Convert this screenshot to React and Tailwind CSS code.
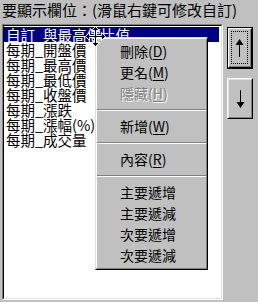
import React from "react";

const FONT = { fontFamily: '"Noto Sans CJK TC", "Noto Sans", sans-serif' };

const rows = [
  "自訂_與最高價比值",
  "每期_開盤價",
  "每期_最高價",
  "每期_最低價",
  "每期_收盤價",
  "每期_漲跌",
  "每期_漲幅(%)",
  "每期_成交量",
];

function Item({ label, mn, disabled }) {
  return (
    <div
      className={
        "h-[21px] leading-[21px] pl-[23px] text-[14px] whitespace-nowrap " +
        (disabled ? "text-[#808080] [text-shadow:1px_1px_0_#ffffff]" : "text-black")
      }
    >
      {label}
      {mn ? (
        <>
          (<span className="underline underline-offset-2">{mn}</span>)
        </>
      ) : null}
    </div>
  );
}

function Sep() {
  return (
    <div className="h-[12px] flex flex-col justify-center">
      <div className="h-px bg-[#808080]" />
      <div className="h-px bg-white" />
    </div>
  );
}

function MoveCursor() {
  return (
    <svg
      width="23"
      height="23"
      viewBox="-1.5 -1.5 23 23"
      className="absolute left-[84px] top-[25px]"
    >
      <path
        d="M10 0 L14 4 L11 4 L11 9 L16 9 L16 6 L20 10 L16 14 L16 11 L11 11 L11 16 L14 16 L10 20 L6 16 L9 16 L9 11 L4 11 L4 14 L0 10 L4 6 L4 9 L9 9 L9 4 L6 4 Z"
        fill="#000"
        stroke="#fff"
        strokeWidth="1"
        strokeLinejoin="miter"
      />
    </svg>
  );
}

export default function App() {
  return (
    <div className="relative w-[258px] h-[302px] bg-[#c0c0c0] overflow-hidden" style={FONT}>
      <div className="h-[24px] pl-[2px] text-[15px] leading-[20px] text-black whitespace-nowrap">
        要顯示欄位：(滑鼠右鍵可修改自訂)
      </div>
      <div className="flex">
        {/* list box */}
        <div className="ml-[2px] w-[221px] h-[276px] border-t border-l border-t-[#808080] border-l-[#808080] border-b border-r border-b-white border-r-white">
          <div className="w-full h-full border-t border-l border-t-black border-l-black border-b border-r border-b-[#dfdfdf] border-r-[#dfdfdf] bg-white pt-[1px]">
            {rows.map((r, i) => (
              <div
                key={i}
                className={
                  "h-[15px] leading-[15px] pl-[2px] text-[14.5px] whitespace-nowrap mr-[2px] " +
                  (i === 0 ? "bg-[#000080] text-white" : "text-black")
                }
              >
                {r}
              </div>
            ))}
          </div>
        </div>
        {/* buttons */}
        <div className="ml-[4px] mt-[3px] flex flex-col gap-[9px]">
          <div className="w-[26px] h-[42px] border border-black">
            <div className="w-full h-full border-t border-l border-t-white border-l-white border-b border-r border-b-black border-r-black">
              <div className="w-full h-full border-b border-r border-b-[#808080] border-r-[#808080] p-[2px]">
                <div className="w-full h-full border border-dotted border-black flex items-center justify-center">
                  <svg width="9" height="18" viewBox="0 0 9 18">
                    <path d="M4.5 0 L8.5 6 L5 6 L5 18 L4 18 L4 6 L0.5 6 Z" fill="#000" />
                  </svg>
                </div>
              </div>
            </div>
          </div>
          <div className="w-[26px] h-[41px] border-t border-l border-t-white border-l-white border-b border-r border-b-black border-r-black">
            <div className="w-full h-full border-t border-l border-t-[#dfdfdf] border-l-[#dfdfdf] border-b border-r border-b-[#808080] border-r-[#808080] flex items-center justify-center">
              <svg width="9" height="18" viewBox="0 0 9 18">
                <path d="M4 0 L5 0 L5 12 L8.5 12 L4.5 18 L0.5 12 L4 12 Z" fill="#000" />
              </svg>
            </div>
          </div>
        </div>
      </div>

      {/* context menu */}
      <div className="absolute left-[95px] top-[37px] w-[113px] h-[233px] border-t border-l border-t-[#dfdfdf] border-l-[#dfdfdf] border-b border-r border-b-black border-r-black bg-[#c0c0c0]" style={FONT}>
        <div className="w-full h-full border-t border-l border-t-white border-l-white border-b border-r border-b-[#808080] border-r-[#808080] py-[2px]">
          <Item label="刪除" mn="D" />
          <Item label="更名" mn="M" />
          <Item label="隱藏" mn="H" disabled />
          <Sep />
          <Item label="新增" mn="W" />
          <Sep />
          <Item label="內容" mn="R" />
          <Sep />
          <Item label="主要遞增" />
          <Item label="主要遞減" />
          <Item label="次要遞增" />
          <Item label="次要遞減" />
        </div>
      </div>

      <MoveCursor />
    </div>
  );
}
